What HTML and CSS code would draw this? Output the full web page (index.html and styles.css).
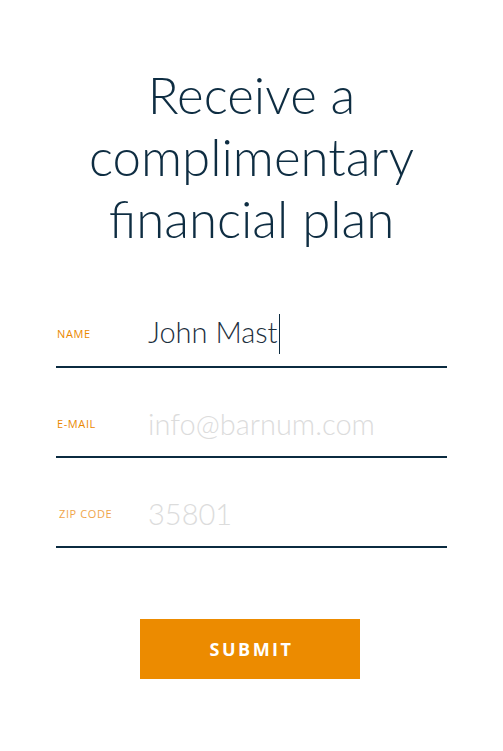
FILE: index.html
```html
<!DOCTYPE html>
<html>
<head>
<meta charset="utf-8">
<link rel="stylesheet" href="styles.css">
</head>
<body>
<main class="page">
  <h1 class="title">Receive a<br>complimentary<br>financial plan</h1>
  <form class="form">
    <label class="row">
      <span class="label">NAME</span>
      <span class="value">John Mast<span class="caret"></span></span>
    </label>
    <label class="row">
      <span class="label">E-MAIL</span>
      <span class="value placeholder">info@barnum.com</span>
    </label>
    <label class="row">
      <span class="label label-zip">ZIP CODE</span>
      <span class="value placeholder">35801</span>
    </label>
    <div class="actions">
      <button type="button" class="submit">SUBMIT</button>
    </div>
  </form>
</main>
</body>
</html>
```

FILE: styles.css
```css
html, body {
  margin: 0;
  padding: 0;
  background: #ffffff;
}
.page {
  width: 503px;
  min-height: 751px;
  display: flex;
  flex-direction: column;
  align-items: center;
}
.title {
  margin: 64px 0 0 0;
  font-family: Lato, "Open Sans", sans-serif;
  font-weight: 300;
  font-size: 51px;
  line-height: 62px;
  color: #0e2d42;
  text-align: center;
  letter-spacing: 0;
}
.form {
  width: 391px;
  margin-top: 28px;
  display: flex;
  flex-direction: column;
}
.row {
  height: 76px;
  border-bottom: 2px solid #0b2b40;
  display: grid;
  grid-template-columns: 92px 1fr;
  align-items: end;
  padding-bottom: 12px;
  box-sizing: content-box;
}
.label {
  font-family: "Open Sans", sans-serif;
  font-size: 11px;
  letter-spacing: 0.6px;
  color: #ea8800;
  padding-left: 1px;
  padding-bottom: 13px;
}
.label-zip { color: #f0a54a; padding-left: 3px; }
.value {
  font-family: Lato, "Open Sans", sans-serif;
  font-weight: 300;
  font-size: 29px;
  line-height: 40px;
  color: #1c2f3d;
}
.placeholder { color: #dcdcdc; }
.caret {
  display: inline-block;
  width: 1px;
  height: 40px;
  background: #0e2d42;
  vertical-align: -11px;
  margin-left: 1px;
}
.actions {
  display: flex;
  justify-content: center;
  padding-right: 3px;
  margin-top: 71px;
}
.submit {
  width: 220px;
  height: 60px;
  border: none;
  background: #ec8b00;
  color: #ffffff;
  font-family: "Open Sans", sans-serif;
  font-weight: 700;
  font-size: 18px;
  letter-spacing: 2.5px;
  padding: 0 0 0 3px;
}
```
